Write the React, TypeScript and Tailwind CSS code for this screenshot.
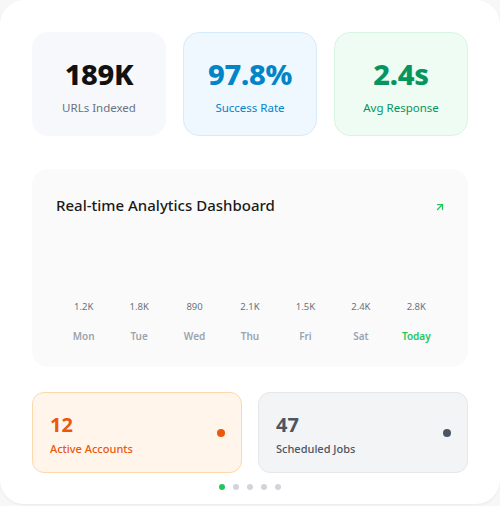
import { ArrowUpRight } from "lucide-react";

const STATS = [
  { value: "189K", label: "URLs Indexed", box: "bg-[#f6f8fb] border-[#f6f8fb]", num: "text-[#111111]", lab: "text-[#6b7280]" },
  { value: "97.8%", label: "Success Rate", box: "bg-[#eff7ff] border-[#d6ebfb]", num: "text-[#0384c7]", lab: "text-[#0384c7]" },
  { value: "2.4s", label: "Avg Response", box: "bg-[#eefcf3] border-[#d8f5e2]", num: "text-[#05955e]", lab: "text-[#05955e]" },
];

const DAYS = [
  { day: "Mon", value: "1.2K" },
  { day: "Tue", value: "1.8K" },
  { day: "Wed", value: "890" },
  { day: "Thu", value: "2.1K" },
  { day: "Fri", value: "1.5K" },
  { day: "Sat", value: "2.4K" },
  { day: "Today", value: "2.8K", today: true },
];

export default function App() {
  return (
    <div className="h-[506px] w-[500px] bg-[#f7f7f7] font-['Noto_Sans',sans-serif]">
      <div className="flex h-[504px] flex-col rounded-[24px] bg-white px-8 pt-8 shadow-[0_1px_3px_rgba(0,0,0,0.06)]">
        <div className="grid grid-cols-3 gap-[17px]">
          {STATS.map((s) => (
            <div key={s.label} className={`flex h-[104px] flex-col items-center rounded-2xl border pt-[26px] ${s.box}`}>
              <div className={`text-[29px] font-extrabold leading-none tracking-[-0.3px] ${s.num}`}>{s.value}</div>
              <div className={`mt-[14px] text-[11.5px] leading-none ${s.lab}`}>{s.label}</div>
            </div>
          ))}
        </div>

        <div className="mt-[33px] flex h-[198px] flex-col rounded-2xl bg-[#fafafa] px-6 pt-[26px]">
          <div className="flex items-center justify-between">
            <h2 className="text-[15px] font-medium leading-5 text-[#1a1a1a]">Real-time Analytics Dashboard</h2>
            <ArrowUpRight className="-mr-[2px] mt-[3px] h-3 w-3 text-[#22c55e]" strokeWidth={2.5} />
          </div>
          <div className="mt-[87px] grid grid-cols-7">
            {DAYS.map((d) => (
              <div key={d.day} className="flex flex-col items-center">
                <div className="text-[9.5px] leading-none text-[#6b7280]">{d.value}</div>
                <div className={`mt-[19px] text-[10px] font-semibold leading-none ${d.today ? "text-[#22c55e]" : "text-[#9ca3af]"}`}>
                  {d.day}
                </div>
              </div>
            ))}
          </div>
        </div>

        <div className="mt-[25px] grid grid-cols-2 gap-4">
          <div className="flex h-[81px] items-center justify-between rounded-xl border border-[#fed7aa] bg-[#fff5eb] pl-[17px] pr-4">
            <div className="pt-[3px]">
              <div className="text-[20px] font-bold leading-none text-[#ea580c]">12</div>
              <div className="mt-[8px] text-[11px] font-medium leading-none text-[#ea580c]">Active Accounts</div>
            </div>
            <span className="h-2 w-2 rounded-full bg-[#ea580c]" />
          </div>
          <div className="flex h-[81px] items-center justify-between rounded-xl border border-[#e5e7eb] bg-[#f3f4f6] pl-[17px] pr-4">
            <div className="pt-[3px]">
              <div className="text-[20px] font-bold leading-none text-[#4b5563]">47</div>
              <div className="mt-[8px] text-[11px] font-medium leading-none text-[#4b5563]">Scheduled Jobs</div>
            </div>
            <span className="h-2 w-2 rounded-full bg-[#4b5563]" />
          </div>
        </div>

        <div className="mt-[11px] flex justify-center gap-2">
          <span className="h-[6px] w-[6px] rounded-full bg-[#22c55e]" />
          <span className="h-[6px] w-[6px] rounded-full bg-[#d1d5db]" />
          <span className="h-[6px] w-[6px] rounded-full bg-[#d1d5db]" />
          <span className="h-[6px] w-[6px] rounded-full bg-[#d1d5db]" />
          <span className="h-[6px] w-[6px] rounded-full bg-[#d1d5db]" />
        </div>
      </div>
    </div>
  );
}
